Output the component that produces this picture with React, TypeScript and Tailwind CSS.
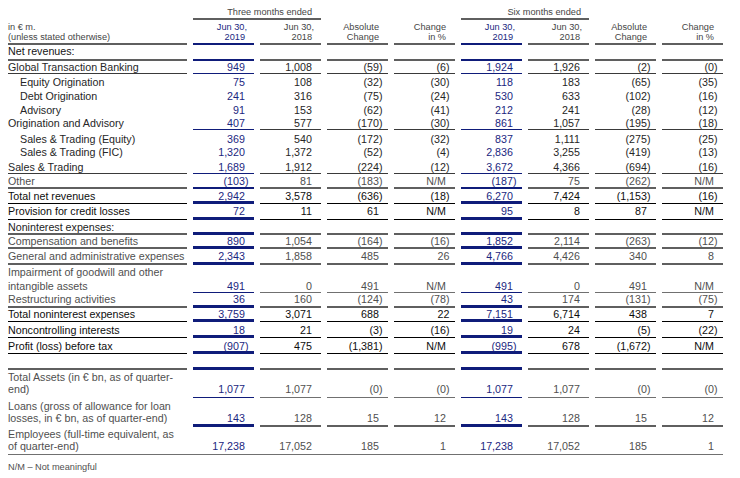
import React from "react";

type Row = {
  label: string[];
  indent?: boolean;
  vals?: string[];
  h: string;
  pt: string;
  ptn: string;
  lh: string;
  tc: string;
  lb: string;
  bb: string;
  nb: string;
};

const TG = "border-b-2 border-[#5f5f5f]";
const TD = "border-b border-[#3a3a3a]";
const TB = "border-b border-black";
const TGY = "border-b border-[#707070]";
const B1 = "border-b border-[#0f1c7a]";
const B2 = "border-b-2 border-[#0f1c7a]";
const B3 = "border-b-[3px] border-[#0f1c7a]";

const DARK = "text-[#262626]";
const BLACK = "text-[#0d0d0d]";
const GRAY = "text-[#4f4f4f]";
const L12 = "leading-[12px]";

const rows: Row[] = [
  { label: ["Net revenues:"], h: "h-[16px]", pt: "pt-0", ptn: "pt-0", lh: L12, tc: "text-[#141414]", lb: TG, bb: B2, nb: TG },
  { label: ["Global Transaction Banking"], vals: ["949", "1,008", "(59)", "(6)", "1,924", "1,926", "(2)", "(0)"], h: "h-[13px]", pt: "pt-0", ptn: "pt-0", lh: L12, tc: DARK, lb: TD, bb: B1, nb: TD },
  { label: ["Equity Origination"], indent: true, vals: ["75", "108", "(32)", "(30)", "118", "183", "(65)", "(35)"], h: "h-[14px]", pt: "pt-[2px]", ptn: "pt-[2px]", lh: L12, tc: DARK, lb: "", bb: "", nb: "" },
  { label: ["Debt Origination"], indent: true, vals: ["241", "316", "(75)", "(24)", "530", "633", "(102)", "(16)"], h: "h-[14px]", pt: "pt-[2px]", ptn: "pt-[2px]", lh: L12, tc: DARK, lb: "", bb: "", nb: "" },
  { label: ["Advisory"], indent: true, vals: ["91", "153", "(62)", "(41)", "212", "241", "(28)", "(12)"], h: "h-[14px]", pt: "pt-[2px]", ptn: "pt-[2px]", lh: L12, tc: DARK, lb: "", bb: "", nb: "" },
  { label: ["Origination and Advisory"], vals: ["407", "577", "(170)", "(30)", "861", "1,057", "(195)", "(18)"], h: "h-[14px]", pt: "pt-[1px]", ptn: "pt-[1px]", lh: L12, tc: DARK, lb: "", bb: B1, nb: TD },
  { label: ["Sales & Trading (Equity)"], indent: true, vals: ["369", "540", "(172)", "(32)", "837", "1,111", "(275)", "(25)"], h: "h-[14px]", pt: "pt-[3px]", ptn: "pt-[3px]", lh: L12, tc: DARK, lb: "", bb: "", nb: "" },
  { label: ["Sales & Trading (FIC)"], indent: true, vals: ["1,320", "1,372", "(52)", "(4)", "2,836", "3,255", "(419)", "(13)"], h: "h-[14px]", pt: "pt-[2px]", ptn: "pt-[2px]", lh: L12, tc: DARK, lb: "", bb: "", nb: "" },
  { label: ["Sales & Trading"], vals: ["1,689", "1,912", "(224)", "(12)", "3,672", "4,366", "(694)", "(16)"], h: "h-[16px]", pt: "pt-[3px]", ptn: "pt-[3px]", lh: L12, tc: DARK, lb: TD, bb: B1, nb: TD },
  { label: ["Other"], vals: ["(103)", "81", "(183)", "N/M", "(187)", "75", "(262)", "N/M"], h: "h-[15px]", pt: "pt-[1px]", ptn: "pt-[1px]", lh: L12, tc: GRAY, lb: TG, bb: B2, nb: TG },
  { label: ["Total net revenues"], vals: ["2,942", "3,578", "(636)", "(18)", "6,270", "7,424", "(1,153)", "(16)"], h: "h-[15px]", pt: "pt-[1px]", ptn: "pt-[1px]", lh: L12, tc: BLACK, lb: TB, bb: B3, nb: TB },
  { label: ["Provision for credit losses"], vals: ["72", "11", "61", "N/M", "95", "8", "87", "N/M"], h: "h-[16px]", pt: "pt-[1px]", ptn: "pt-[1px]", lh: L12, tc: BLACK, lb: TB, bb: B3, nb: TB },
  { label: ["Noninterest expenses:"], h: "h-[15px]", pt: "pt-[1px]", ptn: "pt-[1px]", lh: L12, tc: "text-[#1c1c1c]", lb: TG, bb: B3, nb: TG },
  { label: ["Compensation and benefits"], vals: ["890", "1,054", "(164)", "(16)", "1,852", "2,114", "(263)", "(12)"], h: "h-[14px]", pt: "pt-0", ptn: "pt-0", lh: L12, tc: GRAY, lb: TG, bb: B3, nb: TG },
  { label: ["General and administrative expenses"], vals: ["2,343", "1,858", "485", "!26", "4,766", "4,426", "340", "8"], h: "h-[16px]", pt: "pt-[1px]", ptn: "pt-[1px]", lh: L12, tc: GRAY, lb: TG, bb: B3, nb: TG },
  { label: ["Impairment of goodwill and other", "intangible assets"], vals: ["491", "0", "491", "N/M", "491", "0", "491", "N/M"], h: "h-[28px]", pt: "pt-0", ptn: "pt-[14px]", lh: "leading-[14px]", tc: GRAY, lb: "", bb: B1, nb: TGY },
  { label: ["Restructuring activities"], vals: ["36", "160", "(124)", "(78)", "43", "174", "(131)", "(75)"], h: "h-[15px]", pt: "pt-0", ptn: "pt-0", lh: L12, tc: GRAY, lb: TG, bb: B3, nb: TG },
  { label: ["Total noninterest expenses"], vals: ["3,759", "3,071", "688", "!22", "7,151", "6,714", "438", "7"], h: "h-[14px]", pt: "pt-0", ptn: "pt-0", lh: L12, tc: BLACK, lb: TB, bb: B3, nb: TB },
  { label: ["Noncontrolling interests"], vals: ["18", "21", "(3)", "(16)", "19", "24", "(5)", "(22)"], h: "h-[16px]", pt: "pt-[2px]", ptn: "pt-[2px]", lh: L12, tc: BLACK, lb: TB, bb: B3, nb: TB },
  { label: ["Profit (loss) before tax"], vals: ["(907)", "475", "(1,381)", "N/M", "(995)", "678", "(1,672)", "N/M"], h: "h-[16px]", pt: "pt-[2px]", ptn: "pt-[2px]", lh: L12, tc: BLACK, lb: TB, bb: B3, nb: TB },
  { label: [""], h: "h-[16px]", pt: "pt-0", ptn: "pt-0", lh: L12, tc: GRAY, lb: TG, bb: B3, nb: TG },
  { label: ["Total Assets (in € bn, as of quarter-", "end)"], vals: ["1,077", "1,077", "(0)", "(0)", "1,077", "1,077", "(0)", "(0)"], h: "h-[28px]", pt: "pt-[1px]", ptn: "pt-[13px]", lh: L12, tc: GRAY, lb: "", bb: B1, nb: TGY },
  { label: ["Loans (gross of allowance for loan", "losses, in € bn, as of quarter-end)"], vals: ["143", "128", "15", "12", "143", "128", "15", "12"], h: "h-[29px]", pt: "pt-[2px]", ptn: "pt-[14px]", lh: L12, tc: GRAY, lb: "", bb: B3, nb: TG },
  { label: ["Employees (full-time equivalent, as", "of quarter-end)"], vals: ["17,238", "17,052", "185", "1", "17,238", "17,052", "185", "1"], h: "h-[27px]", pt: "pt-[1px]", ptn: "pt-[13px]", lh: L12, tc: GRAY, lb: "", bb: "", nb: "" },
];

const BLUE_TEXT = "text-[#1a2680]";

function NumCell({ v, row, blue }: { v: string; row: Row; blue: boolean }) {
  const noPad = v.startsWith("!");
  const text = noPad ? v.slice(1) : v;
  const pad = !noPad && text !== "" && !text.startsWith("(");
  return (
    <div
      className={`${row.h} ${row.ptn} ${row.lh} ${blue ? row.bb : row.nb} ${blue ? BLUE_TEXT : row.tc} pr-[5.5px] text-right whitespace-nowrap`}
    >
      {text}
      {pad && <span className="invisible">)</span>}
    </div>
  );
}

export default function App() {
  return (
    <div className="w-[740px] h-[478px] bg-white font-['Liberation_Sans',Arial,sans-serif] overflow-hidden">
      <div className="ml-[8px] grid grid-cols-[179px_repeat(8,61px)] gap-x-[6px] text-[10.7px]">
        {/* Row 0: period headers */}
        <div className="h-[20px]" />
        <div className="col-span-2 h-[20px] pt-[7px] leading-[10px] text-[9.2px] text-[#454545] text-right pr-[9px] border-b-2 border-[#5f5f5f]">
          Three months ended
        </div>
        <div className="col-span-2 h-[20px]" />
        <div className="col-span-2 h-[20px] pt-[7px] leading-[10px] text-[9.2px] text-[#454545] text-right pr-[8px] border-b-2 border-[#5f5f5f]">
          Six months ended
        </div>
        <div className="col-span-2 h-[20px]" />

        {/* Row 1: column headers */}
        <div className="h-[25px] pt-[2px] leading-[10px] text-[9.2px] text-[#454545] border-b-2 border-[#5f5f5f]">
          <div>in € m.</div>
          <div>(unless stated otherwise)</div>
        </div>
        {[0, 1].map((g) => (
          <React.Fragment key={g}>
            <div className="h-[25px] pt-[2px] leading-[10px] text-[9.2px] text-[#1a2680] text-right pr-[9px] border-b-2 border-[#0f1c7a]">
              <div className="-mr-[2px]">Jun 30,</div>
              <div>2019</div>
            </div>
            <div className="h-[25px] pt-[2px] leading-[10px] text-[9.2px] text-[#454545] text-right pr-[9px] border-b-2 border-[#5f5f5f]">
              <div className="-mr-[2px]">Jun 30,</div>
              <div>2018</div>
            </div>
            <div className="h-[25px] pt-[2px] leading-[10px] text-[9.2px] text-[#454545] text-right pr-[9px] border-b-2 border-[#5f5f5f]">
              <div>Absolute</div>
              <div>Change</div>
            </div>
            <div className="h-[25px] pt-[2px] leading-[10px] text-[9.2px] text-[#454545] text-right pr-[9px] border-b-2 border-[#5f5f5f]">
              <div>Change</div>
              <div>in %</div>
            </div>
          </React.Fragment>
        ))}

        {rows.map((row, i) => {
          const vals = row.vals ?? ["", "", "", "", "", "", "", ""];
          return (
            <React.Fragment key={i}>
              <div
                className={`${row.h} ${row.pt} ${row.lh} ${row.lb} ${row.tc} whitespace-nowrap ${row.indent ? "pl-[12px]" : ""}`}
              >
                {row.label.map((l, j) => (
                  <div key={j}>{l}</div>
                ))}
              </div>
              {vals.map((v, j) => (
                <NumCell key={j} v={v} row={row} blue={j === 0 || j === 4} />
              ))}
            </React.Fragment>
          );
        })}
        <div className="col-span-full h-px bg-[#707070]" />
      </div>
      <div className="ml-[8px] mt-[7px] text-[9.2px] leading-[10px] text-[#4f4f4f]">
        N/M – Not meaningful
      </div>
    </div>
  );
}
